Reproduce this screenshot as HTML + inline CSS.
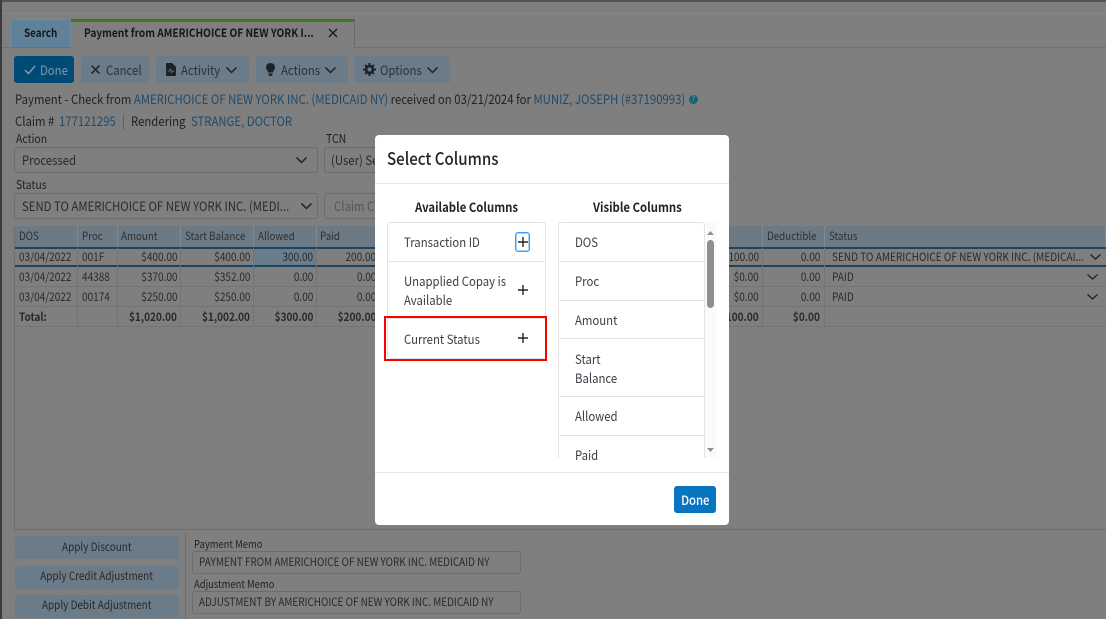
<!DOCTYPE html>
<html><head><meta charset="utf-8"><style>
html,body{margin:0;padding:0}
body{width:1106px;height:619px;overflow:hidden;position:relative;background:#7f7f7f;font-family:"Noto Sans CJK JP","Liberation Sans",sans-serif;font-size:13px;color:#222}
.a,.t{position:absolute;box-sizing:border-box}
.t{white-space:nowrap;line-height:18px;transform:scaleX(.873);transform-origin:left center}
.s{display:inline-block;transform:scaleX(.873);transform-origin:left center;white-space:nowrap}
.m{display:inline-block;transform:scaleX(.873);transform-origin:center;white-space:nowrap}
.l{color:#1f4a6b}
.btn{position:absolute;top:56px;height:27px;background:#6b7b88;border-radius:3px;line-height:27px;color:#2b3136;box-sizing:border-box;white-space:nowrap}
.sel{position:absolute;border:1px solid #6c6c6c;border-radius:3px;height:26px;box-sizing:border-box;line-height:24px;padding-left:7px;white-space:nowrap;color:#2a2a2a;overflow:hidden}
.h{position:absolute;top:226px;height:21px;background:#6c7a85;border-right:1px solid #7f8a92;line-height:21px;font-size:11.2px;color:#2b3136;padding-left:4px;box-sizing:border-box;white-space:nowrap;overflow:hidden}
.c{position:absolute;font-size:11.5px;line-height:18px;color:#2a2a2a;text-align:right;white-space:nowrap;transform:scaleX(.873);transform-origin:left center}
.c[style*="right:"]{transform-origin:right center}
.hl{position:absolute;left:15px;width:1091px;height:1px;background:#747474}
.vl{position:absolute;width:1px;top:248px;height:78px;background:#747474}
.ab{position:absolute;left:15px;width:164px;height:23px;background:#6b7b88;border-radius:3px;text-align:center;font-size:11.4px;line-height:23px;color:#25292c}
.item{position:absolute;color:#3a4046;font-size:13px;line-height:19px;white-space:nowrap;transform:scaleX(.873);transform-origin:left center}
.sep{position:absolute;height:1px;background:#e4e4e4}
svg{position:absolute;overflow:visible}
</style></head><body>
<div class="a" style="left:0;top:0;width:1106px;height:2px;background:#555"></div>
<div class="a" style="left:0;top:0;width:2px;height:619px;background:#3c3c3c"></div>
<div class="a" style="left:2px;top:13px;width:1104px;height:1px;background:#878787"></div>
<div class="a" style="left:2px;top:47px;width:1104px;height:1px;background:#707070"></div>
<div class="a" style="left:10px;top:19px;width:61px;height:28px;background:#5f8199;border:1px solid #6f8b9f;border-bottom:0;border-radius:3px 3px 0 0"></div>
<div class="t" style="left:24px;top:24px;font-weight:700;font-size:11.3px;color:#14181c">Search</div>
<div class="a" style="left:71px;top:19px;width:284px;height:29px;background:#7f7f7f;border-top:3px solid #3d7a1f;border-right:1px solid #6b6b6b"></div>
<div class="t" style="left:84px;top:24px;font-weight:700;font-size:11.6px;color:#14181c">Payment from AMERICHOICE OF NEW YORK I...</div>
<svg style="left:328px;top:28px" width="10" height="10"><path d="M1 1L9 9M9 1L1 9" stroke="#1c2126" stroke-width="1.500"/></svg>

<div class="btn" style="left:14px;width:60px;background:#004a76;color:#7b97ab;padding-left:26px"><span class="s">Done</span></div>
<svg style="left:24px;top:65px" width="12" height="10"><path d="M1 5L4.500 8.500L11 1" stroke="#7f9aae" stroke-width="1.500" fill="none"/></svg>
<div class="btn" style="left:81px;width:68px;padding-left:25px"><span class="s">Cancel</span></div>
<svg style="left:91px;top:65px" width="9" height="9"><path d="M.5 .5L8.500 8.500M8.500 .5L.5 8.500" stroke="#1c2126" stroke-width="1.500"/></svg>
<div class="btn" style="left:156px;width:93px;padding-left:25px"><span class="s">Activity</span></div>
<svg style="left:166px;top:63px" width="10" height="13"><path d="M0 1Q0 0 1 0H6L10 4V12Q10 13 9 13H1Q0 13 0 12Z" fill="#1c2126"/><path d="M1.500 8H3.500L4.500 6L5.500 9.500L6.500 8H8.500" stroke="#6b7b88" stroke-width=".8" fill="none"/></svg>
<svg style="left:226px;top:67px" width="11" height="7"><path d="M.5 .5L5.500 5.500L10.500 .5" stroke="#1c2126" stroke-width="1.500" fill="none"/></svg>
<div class="btn" style="left:256px;width:92px;padding-left:25px"><span class="s">Actions</span></div>
<svg style="left:266px;top:63px" width="9" height="13"><path d="M4.500 0C2 0 0 1.800 0 4.200C0 6.500 1.800 7.500 2 9.500H7C7.200 7.500 9 6.500 9 4.200C9 1.800 7 0 4.500 0ZM2.500 10.500H6.500V11.500L5.500 13H3.500L2.500 11.500Z" fill="#1c2126"/></svg>
<svg style="left:325px;top:67px" width="11" height="7"><path d="M.5 .5L5.500 5.500L10.500 .5" stroke="#1c2126" stroke-width="1.500" fill="none"/></svg>
<div class="btn" style="left:354px;width:96px;padding-left:26px"><span class="s">Options</span></div>
<svg style="left:363px;top:63px" width="13" height="13" viewBox="0 0 13 13"><circle cx="6.500" cy="6.500" r="3.400" fill="none" stroke="#1c2126" stroke-width="2.600"/><path d="M6.500 0V13M0 6.500H13M2 2L11 11M11 2L2 11" stroke="#1c2126" stroke-width="2" stroke-dasharray="2 9 2 0"/></svg>
<svg style="left:427px;top:67px" width="11" height="7"><path d="M.5 .5L5.500 5.500L10.500 .5" stroke="#1c2126" stroke-width="1.500" fill="none"/></svg>

<div class="t" style="left:15px;top:90px">Payment - Check from <span class="l">AMERICHOICE OF NEW YORK INC. (MEDICAID NY)</span> received on 03/21/2024 for <span class="l">MUNIZ, JOSEPH (#37190993)</span></div>
<div class="a" style="left:689px;top:95px;width:9px;height:9px;border-radius:50%;background:#0f6670;color:#7f7f7f;font-size:7px;line-height:9px;text-align:center;font-weight:700">?</div>
<div class="t" style="left:15px;top:112px">Claim #</div>
<div class="t l" style="left:59px;top:112px">177121295</div>
<div class="t" style="left:122px;top:112px;color:#555">|</div>
<div class="t" style="left:131px;top:112px">Rendering</div>
<div class="t l" style="left:191px;top:112px">STRANGE, DOCTOR</div>

<div class="t" style="left:16px;top:130px;font-size:12px">Action</div>
<div class="t" style="left:326px;top:130px;font-size:12px">TCN</div>
<div class="sel" style="left:14px;top:147px;width:304px"><span class="s">Processed</span></div>
<svg style="left:296px;top:157px" width="11" height="7"><path d="M.5 .5L5.500 5.500L10.500 .5" stroke="#1c2126" stroke-width="1.500" fill="none"/></svg>
<div class="sel" style="left:324px;top:147px;width:60px;padding-left:6px"><span class="s">(User) Se</span></div>
<div class="t" style="left:16px;top:176px;font-size:12px">Status</div>
<div class="sel" style="left:14px;top:193px;width:304px"><span class="s">SEND TO AMERICHOICE OF NEW YORK INC. (MEDI...</span></div>
<svg style="left:301px;top:203px" width="11" height="7"><path d="M.5 .5L5.500 5.500L10.500 .5" stroke="#1c2126" stroke-width="1.500" fill="none"/></svg>
<div class="sel" style="left:324px;top:193px;width:60px;padding-left:9px;color:#555"><span class="s">Claim C</span></div>

<div class="a" style="left:14px;top:226px;width:1092px;height:304px;border:1px solid #6e6e6e;border-right:0"></div>
<div class="h" style="left:15px;width:63px"><span class="s">DOS</span></div>
<div class="h" style="left:78px;width:40px"><span class="s">Proc</span></div>
<div class="h" style="left:118px;width:63px;padding-left:3px"><span class="s">Amount</span></div>
<div class="h" style="left:181px;width:73px"><span class="s">Start Balance</span></div>
<div class="h" style="left:254px;width:63px"><span class="s">Allowed</span></div>
<div class="h" style="left:317px;width:446px;padding-left:3px"><span class="s">Paid</span></div>
<div class="h" style="left:763px;width:62px"><span class="s">Deductible</span></div>
<div class="h" style="left:825px;width:281px"><span class="s">Status</span></div>
<div class="a" style="left:15px;top:247px;width:1091px;height:2px;background:#1d4460"></div>
<div class="a" style="left:15px;top:265px;width:1091px;height:2px;background:#1d4460"></div>
<div class="a" style="left:254px;top:249px;width:63px;height:16px;background:#6a7d8d"></div>
<div class="hl" style="top:286px"></div><div class="hl" style="top:306px"></div><div class="hl" style="top:326px"></div>
<div class="vl" style="left:77px"></div><div class="vl" style="left:117px"></div><div class="vl" style="left:180px"></div><div class="vl" style="left:253px"></div><div class="vl" style="left:316px"></div><div class="vl" style="left:762px"></div><div class="vl" style="left:824px"></div>

<div class="c" style="left:19px;top:248px">03/04/2022</div><div class="c" style="left:82px;top:248px">001F</div><div class="c" style="right:929px;top:248px">$400.00</div><div class="c" style="right:856px;top:248px">$400.00</div><div class="c" style="right:793px;top:248px">300.00</div><div class="c" style="right:730px;top:248px">200.00</div>
<div class="c" style="left:19px;top:268px">03/04/2022</div><div class="c" style="left:82px;top:268px">44388</div><div class="c" style="right:929px;top:268px">$370.00</div><div class="c" style="right:856px;top:268px">$352.00</div><div class="c" style="right:793px;top:268px">0.00</div><div class="c" style="right:730px;top:268px">0.00</div>
<div class="c" style="left:19px;top:288px">03/04/2022</div><div class="c" style="left:82px;top:288px">00174</div><div class="c" style="right:929px;top:288px">$250.00</div><div class="c" style="right:856px;top:288px">$250.00</div><div class="c" style="right:793px;top:288px">0.00</div><div class="c" style="right:730px;top:288px">0.00</div>
<div class="c" style="left:19px;top:308px;font-weight:700">Total:</div><div class="c" style="right:929px;top:308px;font-weight:700">$1,020.00</div><div class="c" style="right:856px;top:308px;font-weight:700">$1,002.00</div><div class="c" style="right:793px;top:308px;font-weight:700">$300.00</div><div class="c" style="right:730px;top:308px;font-weight:700">$200.00</div>

<div class="c" style="right:347px;top:248px">100.00</div><div class="c" style="right:286px;top:248px">0.00</div><div class="c" style="left:832px;top:248px">SEND TO AMERICHOICE OF NEW YORK INC. (MEDICAI...</div>
<div class="c" style="right:347px;top:268px">$0.00</div><div class="c" style="right:286px;top:268px">0.00</div><div class="c" style="left:832px;top:268px">PAID</div>
<div class="c" style="right:347px;top:288px">$0.00</div><div class="c" style="right:286px;top:288px">0.00</div><div class="c" style="left:832px;top:288px">PAID</div>
<div class="c" style="right:347px;top:308px;font-weight:700">100.00</div><div class="c" style="right:286px;top:308px;font-weight:700">$0.00</div>
<svg style="left:1090px;top:254px" width="11" height="6"><path d="M.5 .5L5.500 5L10.500 .5" stroke="#1c2126" stroke-width="1.300" fill="none"/></svg>
<svg style="left:1087px;top:274px" width="11" height="6"><path d="M.5 .5L5.500 5L10.500 .5" stroke="#1c2126" stroke-width="1.300" fill="none"/></svg>
<svg style="left:1087px;top:294px" width="11" height="6"><path d="M.5 .5L5.500 5L10.500 .5" stroke="#1c2126" stroke-width="1.300" fill="none"/></svg>

<div class="ab" style="top:536px"><span class="m">Apply Discount</span></div>
<div class="ab" style="top:566px;line-height:21px"><span class="m">Apply Credit Adjustment</span></div>
<div class="ab" style="top:595px;line-height:21px"><span class="m">Apply Debit Adjustment</span></div>
<div class="a" style="left:185px;top:533px;width:1px;height:86px;background:#6e6e6e"></div>
<div class="t" style="left:194px;top:535px;font-size:10.800px">Payment Memo</div>
<div class="sel" style="left:192px;top:551px;width:329px;height:23px;line-height:21px;font-size:11.350px;padding-left:6px"><span class="s">PAYMENT FROM AMERICHOICE OF NEW YORK INC. MEDICAID NY</span></div>
<div class="t" style="left:194px;top:575px;font-size:10.800px">Adjustment Memo</div>
<div class="sel" style="left:192px;top:591px;width:329px;height:23px;line-height:21px;font-size:11.350px;padding-left:6px"><span class="s">ADJUSTMENT BY AMERICHOICE OF NEW YORK INC. MEDICAID NY</span></div>

<div class="a" style="left:375px;top:135px;width:354px;height:390px;background:#fff;border-radius:4px"></div>
<div class="t" style="left:387px;top:148px;font-size:17.300px;line-height:20px;color:#212529;font-weight:500">Select Columns</div>
<div class="a" style="left:375px;top:183px;width:354px;height:1px;background:#e6e6e6"></div>
<div class="t" style="left:415px;top:198px;font-weight:700;color:#212529">Available Columns</div>
<div class="t" style="left:593px;top:198px;font-weight:700;color:#212529">Visible Columns</div>

<div class="a" style="left:387px;top:222px;width:159px;height:137px;border:1px solid #e4e4e4;border-radius:3px"></div>
<div class="sep" style="left:388px;top:261px;width:157px"></div>
<div class="sep" style="left:388px;top:318px;width:157px"></div>
<div class="item" style="left:404px;top:232px">Transaction ID</div>
<div class="item" style="left:404px;top:271px">Unapplied Copay is<br>Available</div>
<div class="item" style="left:404px;top:329px">Current Status</div>
<div class="a" style="left:515px;top:232px;width:15px;height:20px;border:1px solid #3d9be9;border-radius:3px;box-shadow:0 0 0 1px #a9d3f5 inset"></div>
<svg style="left:518px;top:237px" width="10" height="10"><path d="M5 0V10M0 5H10" stroke="#212529" stroke-width="1.400"/></svg>
<svg style="left:518px;top:285px" width="10" height="10"><path d="M5 0V10M0 5H10" stroke="#212529" stroke-width="1.400"/></svg>
<svg style="left:518px;top:333px" width="10" height="10"><path d="M5 0V10M0 5H10" stroke="#212529" stroke-width="1.400"/></svg>
<div class="a" style="left:384px;top:316px;width:163px;height:45px;border:2px solid #f00"></div>

<div class="a" style="left:558px;top:222px;width:147px;height:236px;border:1px solid #e4e4e4;border-bottom:0;border-radius:3px 3px 0 0"></div>
<div class="sep" style="left:559px;top:261px;width:145px"></div>
<div class="sep" style="left:559px;top:300px;width:145px"></div>
<div class="sep" style="left:559px;top:338px;width:145px"></div>
<div class="sep" style="left:559px;top:396px;width:145px"></div>
<div class="sep" style="left:559px;top:435px;width:145px"></div>
<div class="item" style="left:575px;top:232px">DOS</div>
<div class="item" style="left:575px;top:271px">Proc</div>
<div class="item" style="left:575px;top:310px">Amount</div>
<div class="item" style="left:575px;top:349px">Start<br>Balance</div>
<div class="item" style="left:575px;top:406px">Allowed</div>
<div class="item" style="left:575px;top:445px">Paid</div>
<div class="a" style="left:705px;top:222px;width:11px;height:236px;background:#fafafa"></div>
<div class="a" style="left:707px;top:240px;width:7px;height:68px;background:#8f8f8f;border-radius:4px"></div>
<svg style="left:707px;top:231px" width="7" height="4"><path d="M0 4L3.500 0L7 4Z" fill="#8f8f8f"/></svg>
<svg style="left:707px;top:448px" width="7" height="4"><path d="M0 0L3.500 4L7 0Z" fill="#8f8f8f"/></svg>

<div class="a" style="left:375px;top:472px;width:354px;height:1px;background:#e6e6e6"></div>
<div class="a" style="left:674px;top:486px;width:42px;height:27px;background:#0875c1;border-radius:3px;color:#fff;text-align:center;line-height:27px;font-weight:500;font-size:13px"><span class="m">Done</span></div>
</body></html>
